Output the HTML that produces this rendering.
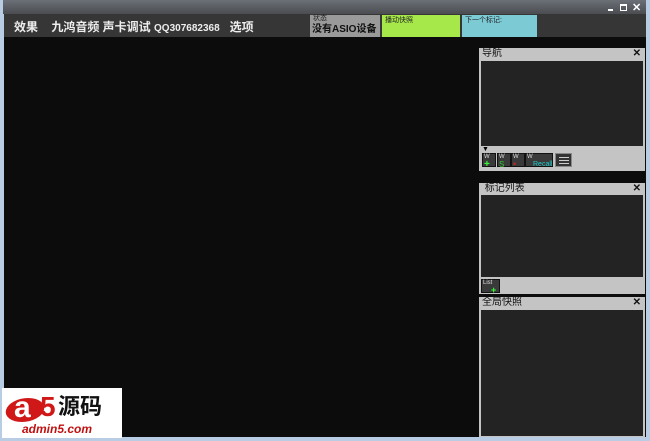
<!DOCTYPE html>
<html><head><meta charset="utf-8"><style>
*{margin:0;padding:0;box-sizing:border-box}
body{width:650px;height:441px;overflow:hidden;background:#b8cde4;position:relative;font-family:"Liberation Sans","Noto Sans CJK SC",sans-serif}
.a{position:absolute}
.dk{background:#232323}
.hd{font-size:10px;color:#111;line-height:12px;padding-left:3px}
.x{position:absolute;right:4px;top:0;font-size:10px;font-weight:bold;color:#111}
.btn{position:absolute;background:#3a3a3a;border:1px solid #111;height:14px;top:153px;font-size:6px;color:#ddd;line-height:7px;padding-left:1px}
</style></head><body>
<div class="a" style="left:3px;top:0;width:643px;height:14px;background:linear-gradient(#6b7077,#4a4c50)"></div>
<div class="a" style="left:608px;top:9px;width:5px;height:2px;background:#fff"></div>
<div class="a" style="left:620px;top:4px;width:7px;height:7px;border:1px solid #fff;border-top-width:2px"></div>
<div class="a" style="left:632px;top:1px;color:#fff;font-size:11px;font-weight:bold">✕</div>
<div class="a" style="left:4px;top:14px;width:642px;height:23px;background:#363636"></div>
<div class="a" style="left:14px;top:18px;color:#eee;font-size:12px;font-weight:bold;white-space:nowrap">效果 &nbsp; &nbsp;九鸿音频 声卡调试 <span style="font-size:10px">QQ307682368</span> &nbsp; 选项</div>
<div class="a" style="left:310px;top:15px;width:70px;height:22px;background:#9a9a9a"></div>
<div class="a" style="left:313px;top:15px;font-size:7px;color:#222;line-height:8px">状态</div>
<div class="a" style="left:312px;top:23px;font-size:10px;font-weight:bold;color:#111;line-height:13px">没有ASIO设备</div>
<div class="a" style="left:382px;top:15px;width:78px;height:22px;background:#a6e84a"></div>
<div class="a" style="left:385px;top:15px;font-size:7px;color:#222">播动快照</div>
<div class="a" style="left:462px;top:15px;width:75px;height:22px;background:#7ccad4"></div>
<div class="a" style="left:465px;top:15px;font-size:7px;color:#222">下一个标记:</div>
<div class="a" style="left:4px;top:37px;width:642px;height:400px;background:#0c0c0c"></div>
<div class="a" style="left:479px;top:48px;width:166px;height:123px;background:#c4c4c4"><div class="hd">导航</div><div class="x">✕</div></div>
<div class="a dk" style="left:481px;top:61px;width:162px;height:85px"></div>
<div class="a" style="left:482px;top:146px;font-size:7px">▼</div>
<div class="btn" style="left:482px;width:14px">W<br><span style="color:#3f3;font-size:10px;font-weight:bold">+</span></div>
<div class="btn" style="left:497px;width:14px">W<br><span style="color:#3c3;font-size:8px">S</span></div>
<div class="btn" style="left:511px;width:14px">W<br><span style="color:#c22;font-size:9px">•</span></div>
<div class="btn" style="left:525px;width:28px">W<br><span style="color:#2cc;font-size:7px;padding-left:6px">Recall</span></div>
<div class="btn" style="left:555px;width:17px;background:#333;border-color:#888"><div style="margin:3px 2px;height:7px;border-top:1px solid #ccc;border-bottom:1px solid #ccc;background:linear-gradient(transparent 2px,#ccc 2px,#ccc 3px,transparent 3px)"></div></div>
<div class="a" style="left:479px;top:183px;width:166px;height:111px;background:#c4c4c4"><div class="hd">&nbsp;标记列表</div><div class="x">✕</div></div>
<div class="a dk" style="left:481px;top:195px;width:162px;height:82px"></div>
<div class="btn" style="left:481px;top:279px;width:19px;height:14px">List<br><span style="color:#3f3;font-size:9px;padding-left:8px;font-weight:bold">+</span></div>
<div class="a" style="left:479px;top:297px;width:166px;height:140px;background:#c4c4c4"><div class="hd">全局快照</div><div class="x">✕</div></div>
<div class="a dk" style="left:481px;top:310px;width:162px;height:126px"></div>
<div class="a" style="left:2px;top:388px;width:120px;height:50px;background:#fff"></div>
<div class="a" style="left:6px;top:398px;width:38px;height:24px;border-radius:50%;background:#d01818;transform:skewX(-15deg)"></div>
<div class="a" style="left:14px;top:390px;font-size:30px;font-weight:bold;color:#fff;line-height:36px">a</div>
<div class="a" style="left:40px;top:390px;font-size:28px;font-weight:bold;color:#d01818;line-height:34px">5</div>
<div class="a" style="left:58px;top:394px;font-size:22px;font-weight:bold;color:#111;line-height:26px">源码</div>
<div class="a" style="left:22px;top:422px;font-size:12px;font-weight:bold;color:#c01010;font-style:italic">admin5.com</div>
</body></html>
